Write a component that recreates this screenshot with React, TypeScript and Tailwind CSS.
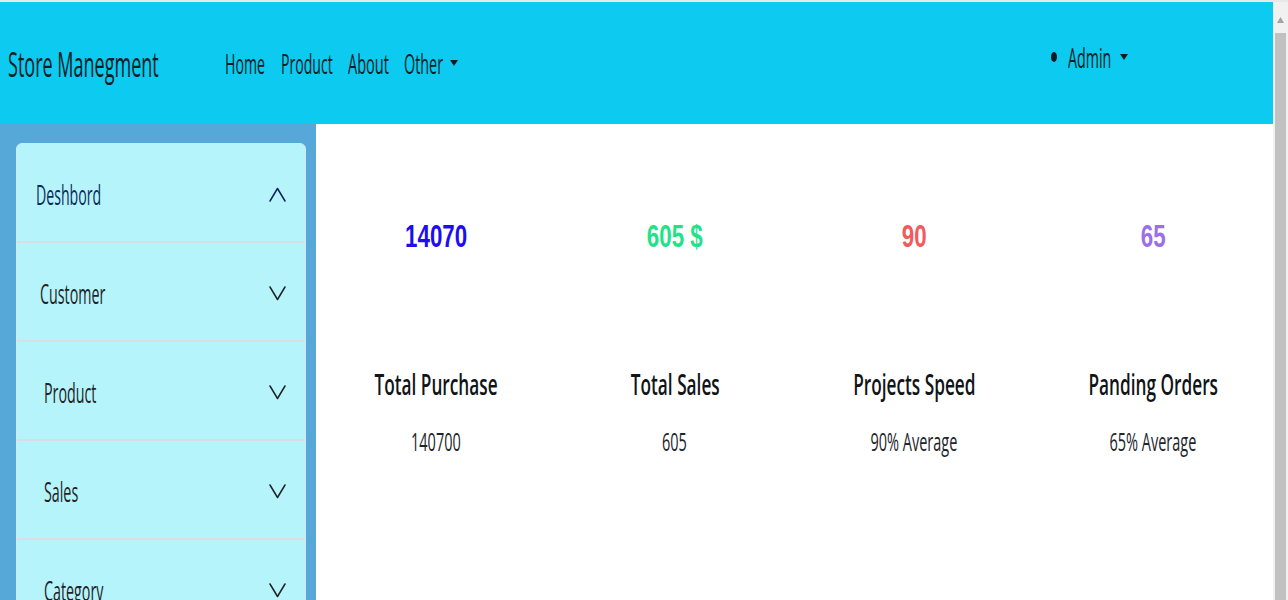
import type { ReactNode } from 'react'

// Text in the reference is squeezed sideways, so labels are drawn in a box of
// their visible width and the glyphs are scaled down to fit it.
function Sq({ box, scale, children }: { box: string; scale: string; children: ReactNode }) {
    return (
        <span className={`block shrink-0 ${box}`}>
            <span className={`inline-block origin-left whitespace-nowrap leading-none ${scale}`}>{children}</span>
        </span>
    )
}

function Caret() {
    return (
        <svg width="8" height="6" viewBox="0 0 8 6" aria-hidden className="shrink-0">
            <path d="M0 0h8L4 6z" fill="#0b1d24" />
        </svg>
    )
}

function Chevron({ up }: { up?: boolean }) {
    return (
        <svg
            width="17"
            height="15"
            viewBox="0 0 17 15"
            fill="none"
            stroke={up ? '#10235a' : '#1f2326'}
            strokeWidth="1.5"
            strokeLinecap="round"
            strokeLinejoin="round"
            aria-hidden
            className="shrink-0"
        >
            <polyline points={up ? '1,14 8.5,1.5 16,14' : '1,1 8.5,13.5 16,1'} />
        </svg>
    )
}

const menu = [
    { label: 'Deshbord', pad: 'pl-[19px]', box: 'w-[66px]', scale: 'scale-x-[0.505]', open: true },
    { label: 'Customer', pad: 'pl-[23px]', box: 'w-[66px]', scale: 'scale-x-[0.51]' },
    { label: 'Product', pad: 'pl-[27px]', box: 'w-[54px]', scale: 'scale-x-[0.51]' },
    { label: 'Sales', pad: 'pl-[27px]', box: 'w-[35px]', scale: 'scale-x-[0.51]' },
    { label: 'Category', pad: 'pl-[27px]', box: 'w-[62px]', scale: 'scale-x-[0.51]' },
]

const stats = [
    { value: '14070', color: 'text-[#1c0ef0]', title: 'Total Purchase', sub: '140700' },
    { value: '605 $', color: 'text-[#1fe388]', title: 'Total Sales', sub: '605' },
    { value: '90', color: 'text-[#f25a5c]', title: 'Projects Speed', sub: '90% Average' },
    { value: '65', color: 'text-[#9b6fe6]', title: 'Panding Orders', sub: '65% Average' },
]

export default function App() {
    return (
        <div className="flex h-[600px] w-[1288px] overflow-hidden bg-white font-['Open_Sans',sans-serif]">
            <div className="flex min-w-0 flex-1 flex-col">
                <div className="h-[2px] bg-[#e8e8e8]" />
                <header className="flex h-[122px] shrink-0 items-center bg-[#0dcaf0] text-[28px] text-[#0b1d24]">
                    <div className="mt-[6px] w-[225px] shrink-0 pl-2">
                        <span className="inline-block origin-left whitespace-nowrap text-[34px] leading-none scale-x-[0.53]">
                            Store Manegment
                        </span>
                    </div>
                    <nav className="flex items-center">
                        <Sq box="w-[40px]" scale="scale-x-[0.505]">Home</Sq>
                        <span className="w-[16px]" />
                        <Sq box="w-[52px]" scale="scale-x-[0.503]">Product</Sq>
                        <span className="w-[15px]" />
                        <Sq box="w-[41px]" scale="scale-x-[0.52]">About</Sq>
                        <span className="w-[15px]" />
                        <Sq box="w-[39px]" scale="scale-x-[0.513]">Other</Sq>
                        <span className="w-[7px]" />
                        <Caret />
                    </nav>
                    <div className="mb-[12px] ml-auto flex w-[222px] shrink-0 items-center">
                        <span className="h-[10px] w-[6px] rounded-[50%] bg-[#0b1d24]" />
                        <span className="w-[11px]" />
                        <Sq box="w-[44px]" scale="scale-x-[0.51]">Admin</Sq>
                        <span className="w-[8px]" />
                        <Caret />
                    </div>
                </header>

                <div className="flex min-h-0 flex-1">
                    <aside className="w-[316px] shrink-0 bg-[#56a8d8] pl-4 pr-[10px] pt-[19px]">
                        <div className="overflow-hidden rounded-t-[6px] border border-[#d3e9ef] bg-[#b5f4fa]">
                            {menu.map((m) => (
                                <div
                                    key={m.label}
                                    className={`flex h-[99px] items-center justify-between border-b-2 border-[#dcdde2] pr-[19px] pt-[3px] text-[28px] ${m.pad} ${m.open ? 'text-[#0d2a5c]' : 'text-[#1f2326]'}`}
                                >
                                    <Sq box={m.box} scale={m.scale}>{m.label}</Sq>
                                    <Chevron up={m.open} />
                                </div>
                            ))}
                        </div>
                    </aside>

                    <main className="grid flex-1 grid-cols-4 content-start">
                        {stats.map((s) => (
                            <div key={s.title} className="flex flex-col items-center">
                                <span
                                    className={`mt-[97px] inline-block whitespace-nowrap font-['Liberation_Sans',sans-serif] text-[31px] font-bold leading-none scale-x-[0.72] ${s.color}`}
                                >
                                    {s.value}
                                </span>
                                <span className="mt-[118px] inline-block whitespace-nowrap text-[28px] font-semibold leading-none text-[#111416] scale-x-[0.615]">
                                    {s.title}
                                </span>
                                <span className="mt-[31px] inline-block whitespace-nowrap text-[25px] leading-none text-[#212529] scale-x-[0.58]">
                                    {s.sub}
                                </span>
                            </div>
                        ))}
                    </main>
                </div>
            </div>

            <div className="flex w-[15px] shrink-0 flex-col bg-[#f1f1f1]">
                <div className="h-[2px] bg-[#e8e8e8]" />
                <div className="flex h-[28px] items-start justify-center pt-[15px]">
                    <svg width="7" height="6" viewBox="0 0 7 6" aria-hidden>
                        <path d="M3.5 0L7 6H0z" fill="#a3a3a3" />
                    </svg>
                </div>
                <div className="mx-auto mt-[3px] w-[11px] flex-1 bg-[#c1c1c1]" />
            </div>
        </div>
    )
}
